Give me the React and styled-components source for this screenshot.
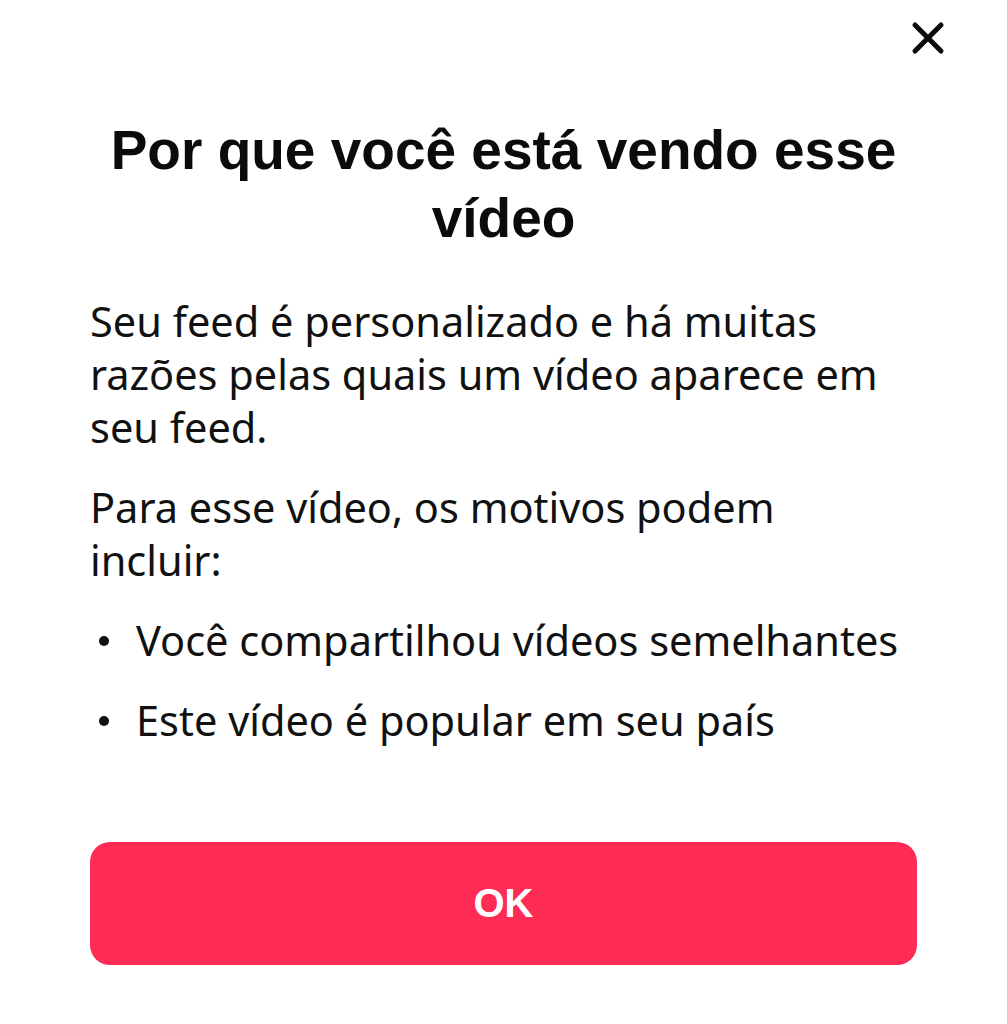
import React from "react";
import styled, { createGlobalStyle } from "styled-components";

const GlobalStyle = createGlobalStyle`
  html, body {
    margin: 0;
    padding: 0;
    background: #ffffff;
  }
`;

function CloseIcon() {
  return (
    <svg width="34" height="34" viewBox="0 0 34 34">
      <path d="M4 4 L30 30 M30 4 L4 30" stroke="#0b0b0b" strokeWidth="5" strokeLinecap="round" />
    </svg>
  );
}

export default function App() {
  return (
    <>
      <GlobalStyle />
      <Sheet>
        <TopBar>
          <CloseBtn aria-label="Fechar">
            <CloseIcon />
          </CloseBtn>
        </TopBar>
        <Title>Por que você está vendo esse vídeo</Title>
        <Body>
          <Para>Seu feed é personalizado e há muitas razões pelas quais um vídeo aparece em seu feed.</Para>
          <Para>Para esse vídeo, os motivos podem incluir:</Para>
          <List>
            <Item>Você compartilhou vídeos semelhantes</Item>
            <Item>Este vídeo é popular em seu país</Item>
          </List>
        </Body>
        <OkBtn>OK</OkBtn>
      </Sheet>
    </>
  );
}

const Sheet = styled.div`
  width: 1007px;
  height: 1024px;
  box-sizing: border-box;
  padding: 0 90px;
  display: flex;
  flex-direction: column;
  background: #fff;
`;

const TopBar = styled.div`
  height: 116px;
  display: flex;
  justify-content: flex-end;
  align-items: flex-start;
  margin-right: -28px;
`;

const CloseBtn = styled.button`
  margin-top: 21px;
  padding: 0;
  border: none;
  background: none;
  width: 34px;
  height: 34px;
  display: flex;
  align-items: center;
  justify-content: center;
`;

const Title = styled.h1`
  margin: 0 -10px;
  font-family: "Liberation Sans", Arial, sans-serif;
  font-weight: 700;
  font-size: 55px;
  line-height: 68px;
  text-align: center;
  color: #0b0b0b;
`;

const Body = styled.div`
  margin-top: 43px;
  max-width: 812px;
  display: flex;
  flex-direction: column;
  gap: 27px;
  font-family: "Noto Sans", "Open Sans", sans-serif;
  font-size: 41.5px;
  line-height: 53px;
  color: #111;
`;

const Para = styled.p`
  margin: 0;
`;

const List = styled.ul`
  margin: 0;
  padding: 0;
  list-style: none;
  display: flex;
  flex-direction: column;
  gap: 27px;
`;

const Item = styled.li`
  display: flex;
  align-items: center;
  white-space: nowrap;
  &::before {
    content: "";
    width: 10px;
    height: 10px;
    border-radius: 50%;
    background: #111;
    margin: 0 27px 0 9px;
    flex: none;
  }
`;

const OkBtn = styled.button`
  margin-top: auto;
  margin-bottom: 59px;
  height: 123px;
  border: none;
  border-radius: 20px;
  background: #fe2c55;
  color: #fff;
  font-family: "Liberation Sans", Arial, sans-serif;
  font-weight: 700;
  font-size: 40px;
`;
